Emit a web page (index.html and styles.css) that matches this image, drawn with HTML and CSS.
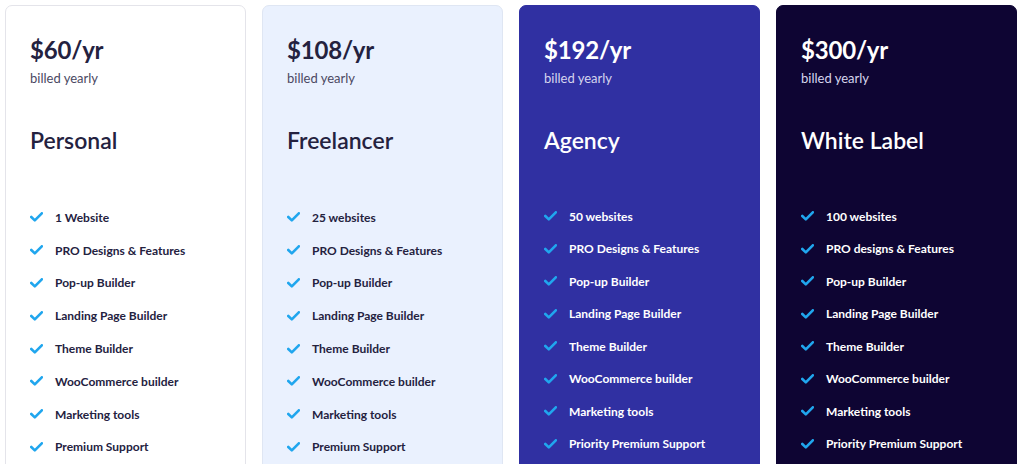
FILE: index.html
```html
<!DOCTYPE html>
<html>
<head>
<title>Pricing</title>
<link rel="stylesheet" href="styles.css">
</head>
<body>

<div id="plans">

	<div class="plan personal">
		<div class="price">$60/yr</div>
		<div class="billed">billed yearly</div>
		<h2>Personal</h2>
		<ul class="features">
			<li>1 Website</li>
			<li>PRO Designs &amp; Features</li>
			<li>Pop-up Builder</li>
			<li>Landing Page Builder</li>
			<li>Theme Builder</li>
			<li>WooCommerce builder</li>
			<li>Marketing tools</li>
			<li>Premium Support</li>
		</ul>
	</div>

	<div class="plan freelancer">
		<div class="price">$108/yr</div>
		<div class="billed">billed yearly</div>
		<h2>Freelancer</h2>
		<ul class="features">
			<li>25 websites</li>
			<li>PRO Designs &amp; Features</li>
			<li>Pop-up Builder</li>
			<li>Landing Page Builder</li>
			<li>Theme Builder</li>
			<li>WooCommerce builder</li>
			<li>Marketing tools</li>
			<li>Premium Support</li>
		</ul>
	</div>

	<div class="plan agency dark">
		<div class="price">$192/yr</div>
		<div class="billed">billed yearly</div>
		<h2>Agency</h2>
		<ul class="features">
			<li>50 websites</li>
			<li>PRO Designs &amp; Features</li>
			<li>Pop-up Builder</li>
			<li>Landing Page Builder</li>
			<li>Theme Builder</li>
			<li>WooCommerce builder</li>
			<li>Marketing tools</li>
			<li>Priority Premium Support</li>
		</ul>
	</div>

	<div class="plan whitelabel dark">
		<div class="price">$300/yr</div>
		<div class="billed">billed yearly</div>
		<h2>White Label</h2>
		<ul class="features">
			<li>100 websites</li>
			<li>PRO designs &amp; Features</li>
			<li>Pop-up Builder</li>
			<li>Landing Page Builder</li>
			<li>Theme Builder</li>
			<li>WooCommerce builder</li>
			<li>Marketing tools</li>
			<li>Priority Premium Support</li>
		</ul>
	</div>

</div>

</body>
</html>
```

FILE: styles.css
```css
body {
	font-family: "Lato", "Noto Sans", sans-serif;
	margin: 0;
	padding: 5px 7px 0 5px;
	background: #fff;
	color: #24223f;
	overflow: hidden;
}

#plans {
	display: flex;
	gap: 16px;
	height: 520px;
}

.plan {
	flex: 1;
	border: 1px solid #e4e4ea;
	border-radius: 7px;
	padding: 29px 24px 0 24px;
}

.freelancer {
	background: #eaf1fe;
	border-color: #dfe6f3;
}

.agency {
	background: #3030a2;
	border-color: #3030a2;
}

.whitelabel {
	background: #0e0533;
	border-color: #0e0533;
}

.dark {
	color: #fff;
}

.price {
	font-size: 24px;
	font-weight: 700;
	line-height: 30px;
	letter-spacing: -0.2px;
}

.billed {
	font-size: 13px;
	line-height: 18px;
	margin-top: 4px;
	color: #4a4862;
}

.dark .billed {
	color: #d6d5ee;
}

h2 {
	font-size: 23px;
	font-weight: 600;
	line-height: 30px;
	margin: 38px 0 0 0;
}

.features {
	list-style: none;
	margin: 46px 0 0 0;
	padding: 0;
}

.dark .features {
	margin-top: 45px;
}

.features li {
	display: flex;
	align-items: center;
	height: 32.8px;
	font-size: 12px;
	font-weight: 700;
}

.dark .features li {
	height: 32.5px;
}

.features li::before {
	content: "";
	width: 13px;
	height: 10px;
	margin: 0 12px 0 0;
	flex: none;
	background: url("data:image/svg+xml,%3Csvg xmlns='http://www.w3.org/2000/svg' viewBox='0 0 13 10'%3E%3Cpath d='M1.3 5 L4.8 8.4 L11.8 1.3' fill='none' stroke='%2320a6ee' stroke-width='2.6' stroke-linecap='round' stroke-linejoin='round'/%3E%3C/svg%3E") no-repeat center;
}
```
